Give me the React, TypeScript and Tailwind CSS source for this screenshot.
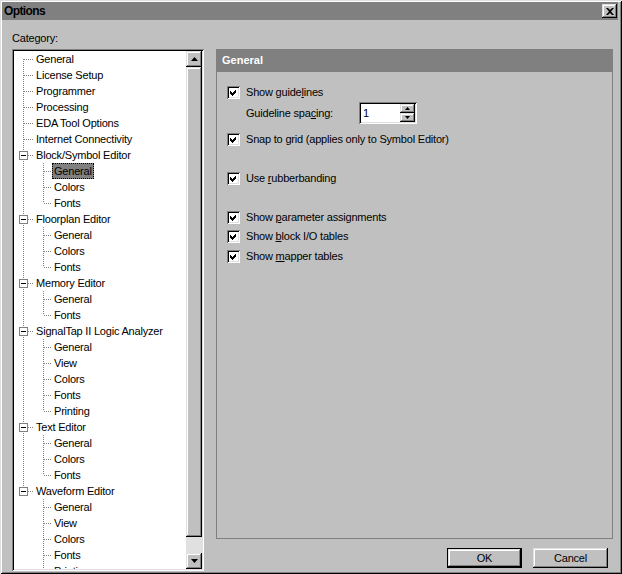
import React from 'react';

const raised =
  'shadow-[inset_-1px_-1px_0_#000,inset_1px_1px_0_#dfdfdf,inset_-2px_-2px_0_#808080,inset_2px_2px_0_#fff]';
const sunken =
  'shadow-[inset_1px_1px_0_#808080,inset_-1px_-1px_0_#fff,inset_2px_2px_0_#000,inset_-2px_-2px_0_#dfdfdf]';

type Node = { label: string; children?: string[] };

const tree: Node[] = [
  { label: 'General' },
  { label: 'License Setup' },
  { label: 'Programmer' },
  { label: 'Processing' },
  { label: 'EDA Tool Options' },
  { label: 'Internet Connectivity' },
  { label: 'Block/Symbol Editor', children: ['General', 'Colors', 'Fonts'] },
  { label: 'Floorplan Editor', children: ['General', 'Colors', 'Fonts'] },
  { label: 'Memory Editor', children: ['General', 'Fonts'] },
  { label: 'SignalTap II Logic Analyzer', children: ['General', 'View', 'Colors', 'Fonts', 'Printing'] },
  { label: 'Text Editor', children: ['General', 'Colors', 'Fonts'] },
  { label: 'Waveform Editor', children: ['General', 'View', 'Colors', 'Fonts', 'Printing'] },
];

type Row = {
  key: string;
  label: string;
  depth: 0 | 1;
  first?: boolean;
  lastRoot?: boolean;
  hasKids?: boolean;
  lastChild?: boolean;
  selected?: boolean;
};

const rows: Row[] = [];
tree.forEach((n, i) => {
  const lastRoot = i === tree.length - 1;
  rows.push({ key: `r${i}`, label: n.label, depth: 0, first: i === 0, lastRoot, hasKids: !!n.children });
  n.children?.forEach((c, j) => {
    rows.push({
      key: `r${i}c${j}`,
      label: c,
      depth: 1,
      lastRoot,
      lastChild: j === n.children!.length - 1,
      selected: i === 6 && j === 0,
    });
  });
});

const dot = { stroke: '#808080', strokeDasharray: '1 1', shapeRendering: 'crispEdges' as const };

function Connector({ row }: { row: Row }) {
  if (row.depth === 0) {
    return (
      <svg width="20" height="16" className="shrink-0">
        <line x1="9.5" y1={row.first ? 8 : 0} x2="9.5" y2={row.lastRoot ? 8 : 16} {...dot} />
        {row.hasKids ? (
          <>
            <line x1="14" y1="8.5" x2="20" y2="8.5" {...dot} />
            <rect x="5.5" y="4.5" width="8" height="8" fill="#fff" stroke="#808080" shapeRendering="crispEdges" />
            <line x1="7" y1="8.5" x2="12" y2="8.5" stroke="#000" shapeRendering="crispEdges" />
          </>
        ) : (
          <line x1="10" y1="8.5" x2="20" y2="8.5" {...dot} />
        )}
      </svg>
    );
  }
  return (
    <svg width="38" height="16" className="shrink-0">
      {!row.lastRoot && <line x1="9.5" y1="0" x2="9.5" y2="16" {...dot} />}
      <line x1="29.5" y1="0" x2="29.5" y2={row.lastChild ? 8 : 16} {...dot} />
      <line x1="30" y1="8.5" x2="38" y2="8.5" {...dot} />
    </svg>
  );
}

function Arrow({ up }: { up?: boolean }) {
  return (
    <svg width="7" height="4" viewBox="0 0 7 4">
      <polygon points={up ? '3.5,0 7,4 0,4' : '0,0 7,0 3.5,4'} fill="#000" />
    </svg>
  );
}

function Check({ children }: { children: React.ReactNode }) {
  return (
    <div className="flex items-center h-[13px]">
      <span className={`w-[13px] h-[13px] shrink-0 bg-white ${sunken}`}>
        <svg width="13" height="13" viewBox="0 0 13 13">
          <polygon points="3,5 5,7 9,3 9,6 5,10 3,8" fill="#000" shapeRendering="crispEdges" />
        </svg>
      </span>
      <span className="ml-[6px] leading-[13px] -mt-px whitespace-nowrap">{children}</span>
    </div>
  );
}

export default function App() {
  return (
    <div
      className={`w-[622px] h-[574px] bg-[#c0c0c0] pl-[2px] pt-[2px] pr-[4px] pb-[2px] flex flex-col overflow-hidden text-[11px] tracking-[-0.2px] text-black font-['Liberation_Sans',Arial,sans-serif] shadow-[inset_1px_1px_0_#dfdfdf,inset_-1px_-1px_0_#000,inset_2px_2px_0_#fff,inset_-2px_-2px_0_#808080]`}
    >
      {/* title bar */}
      <div className="h-[18px] shrink-0 bg-[#808080] flex items-center justify-between">
        <span className="pl-[2px] font-bold text-[12px] tracking-[-0.6px]">Options</span>
        <button className={`w-[15px] h-[14px] mr-[1px] bg-[#c0c0c0] ${raised} flex items-center justify-center`}>
          <svg width="8" height="7" viewBox="0 0 8 7">
            <path d="M0 0h2l2 2 2-2h2L5 3.5 8 7H6L4 5 2 7H0l3-3.5z" fill="#000" />
          </svg>
        </button>
      </div>

      <div className="flex flex-1 min-h-0 pl-[10px]">
        {/* left column */}
        <div className="w-[192px] flex flex-col pb-[1px]">
          <div className="h-[29px] pt-[12px] leading-[13px] shrink-0">Category:</div>
          <div className={`flex-1 min-h-0 p-[2px] bg-white ${sunken} flex`}>
            <div className="flex-1 overflow-hidden bg-white">
              {rows.map((r) => (
                <div key={r.key} className="h-[16px] flex items-center">
                  <Connector row={r} />
                  <span
                    className={`h-[16px] px-[2px] leading-[16px] whitespace-nowrap ${
                      r.selected ? 'bg-[#808080] outline-1 outline-dotted outline-black -outline-offset-1' : ''
                    }`}
                  >
                    {r.label}
                  </span>
                </div>
              ))}
            </div>
            <div className="w-[16px] flex flex-col bg-[#e0e0e0]">
              <div className={`h-[16px] bg-[#c0c0c0] ${raised} flex items-center justify-center`}>
                <Arrow up />
              </div>
              <div className={`h-[470px] bg-[#c0c0c0] ${raised}`} />
              <div className="flex-1" />
              <div className={`h-[16px] bg-[#c0c0c0] ${raised} flex items-center justify-center`}>
                <Arrow />
              </div>
            </div>
          </div>
        </div>

        {/* right column */}
        <div className="ml-[12px] w-[397px] flex flex-col pt-[29px]">
          <div className="h-[490px] border border-[#808080] flex flex-col">
            <div className="h-[23px] -mt-px bg-[#808080] text-white font-bold tracking-normal pl-[5px] flex items-center">
              General
            </div>
            <div className="flex flex-col pl-[10px]">
              <div className="mt-[14px]">
                <Check>
                  Show guide<span className="underline underline-offset-1">l</span>ines
                </Check>
              </div>
              <div className="mt-[3px] h-[22px] flex items-center pl-[19px]">
                <span className="w-[113px] whitespace-nowrap">
                  Guideline spa<span className="underline underline-offset-1">c</span>ing:
                </span>
                <div className={`w-[58px] h-[22px] p-[2px] bg-white ${sunken} flex`}>
                  <span className="flex-1 pl-[2px] leading-[18px]">1</span>
                  <div className="w-[15px] flex flex-col">
                    <div className={`h-[9px] bg-[#c0c0c0] ${raised} flex items-center justify-center`}>
                      <svg width="5" height="3" viewBox="0 0 5 3">
                        <polygon points="2.5,0 5,3 0,3" fill="#000" />
                      </svg>
                    </div>
                    <div className={`h-[9px] bg-[#c0c0c0] ${raised} flex items-center justify-center`}>
                      <svg width="5" height="3" viewBox="0 0 5 3">
                        <polygon points="0,0 5,0 2.5,3" fill="#000" />
                      </svg>
                    </div>
                  </div>
                </div>
              </div>
              <div className="mt-[9px]">
                <Check>
                  Snap to <span className="underline underline-offset-1">g</span>rid (applies only to Symbol Editor)
                </Check>
              </div>
              <div className="mt-[26px]">
                <Check>
                  Use <span className="underline underline-offset-1">r</span>ubberbanding
                </Check>
              </div>
              <div className="mt-[26px]">
                <Check>
                  Show <span className="underline underline-offset-1">p</span>arameter assignments
                </Check>
              </div>
              <div className="mt-[6px]">
                <Check>
                  Show <span className="underline underline-offset-1">b</span>lock I/O tables
                </Check>
              </div>
              <div className="mt-[7px]">
                <Check>
                  Show <span className="underline underline-offset-1">m</span>apper tables
                </Check>
              </div>
            </div>
          </div>

          <div className="mt-[9px] flex justify-end gap-[11px] pr-[5px]">
            <div className="w-[75px] h-[20px] border border-black">
              <button className={`w-full h-full bg-[#c0c0c0] ${raised}`}>OK</button>
            </div>
            <button className={`w-[75px] h-[20px] bg-[#c0c0c0] ${raised}`}>Cancel</button>
          </div>
        </div>
      </div>
    </div>
  );
}
